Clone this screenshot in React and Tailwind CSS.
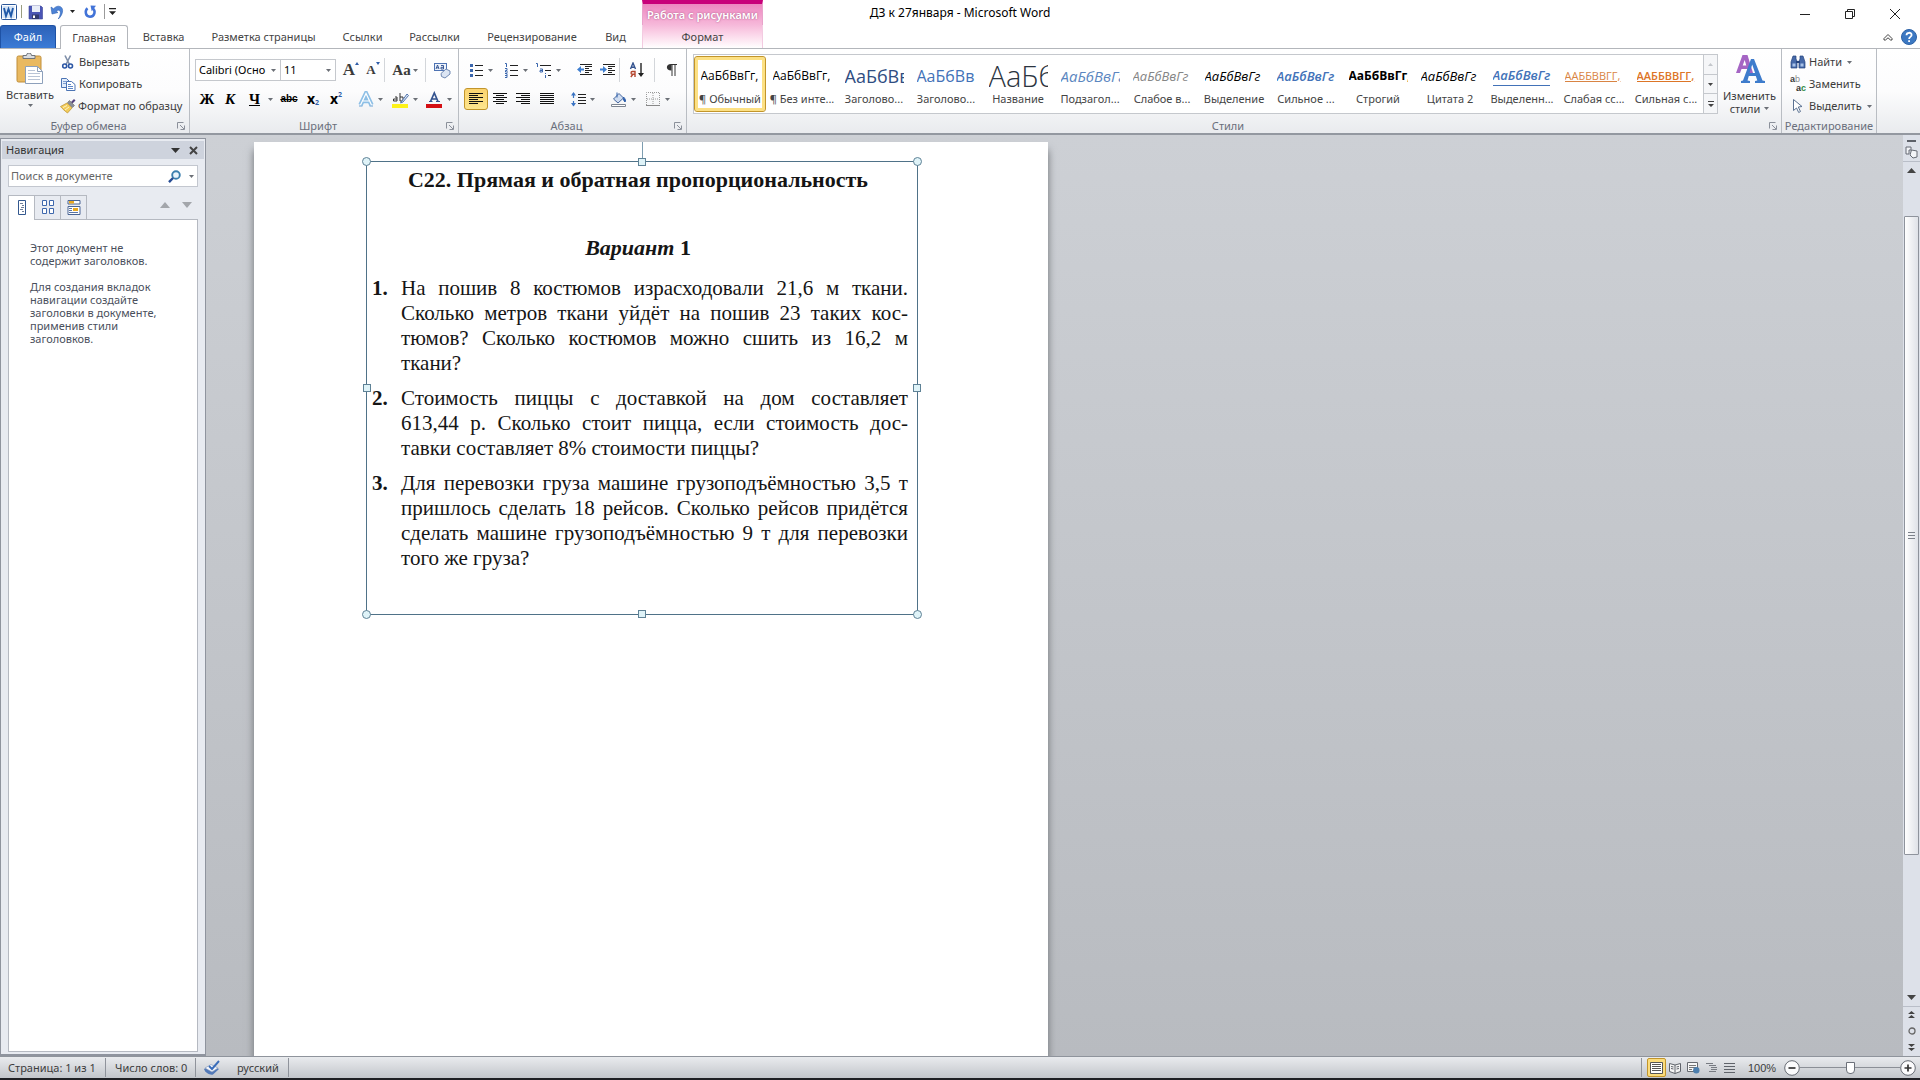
import React, { useState } from "react";

const tabs = [
  { name: "Вставка", width: "w-[69px]" },
  { name: "Разметка страницы", width: "w-[131px]" },
  { name: "Ссылки", width: "w-[67px]" },
  { name: "Рассылки", width: "w-[77px]" },
  { name: "Рецензирование", width: "w-[118px]" },
  { name: "Вид", width: "w-[49px]" },
];

const styles = [
  { name: "¶ Обычный", sample: "АаБбВвГг,", look: "text-[12px] text-black" },
  { name: "¶ Без инте...", sample: "АаБбВвГг,", look: "text-[12px] text-black" },
  { name: "Заголово...", sample: "АаБбВв", look: "text-[18px] font-medium text-[#2f4d82]" },
  { name: "Заголово...", sample: "АаБбВв", look: "text-[16px] font-medium text-[#4272b8]" },
  { name: "Название", sample: "АаБб", look: "text-[29px] font-light text-[#2b3440]" },
  { name: "Подзагол...", sample: "АаБбВвГг", look: "text-[15px] italic text-[#5b86c0]" },
  { name: "Слабое в...", sample: "АаБбВвГг", look: "text-[13px] italic text-[#858585]" },
  { name: "Выделение", sample: "АаБбВвГг", look: "text-[13px] italic text-black" },
  { name: "Сильное ...", sample: "АаБбВвГг", look: "text-[13px] italic font-semibold text-[#4272b8]" },
  { name: "Строгий", sample: "АаБбВвГг,", look: "text-[12px] font-bold text-black" },
  { name: "Цитата 2", sample: "АаБбВвГг", look: "text-[13px] italic text-black" },
  {
    name: "Выделенн...",
    sample: "АаБбВвГг",
    look: "text-[13px] italic font-semibold text-[#4272b8] border-b border-[#4272b8]",
  },
  {
    name: "Слабая сс...",
    sample: "ААББВВГГ,",
    look: "text-[11px] text-[#d98443] underline",
  },
  {
    name: "Сильная с...",
    sample: "ААББВВГГ,",
    look: "text-[11px] font-semibold text-[#dd7526] underline",
  },
];

const tasks = [
  [
    "На пошив 8 костюмов израсходовали 21,6 м ткани.",
    "Сколько метров ткани уйдёт на пошив 23 таких кос-",
    "тюмов? Сколько костюмов можно сшить из 16,2 м",
    "ткани?",
  ],
  [
    "Стоимость пиццы с доставкой на дом составляет",
    "613,44 р. Сколько стоит пицца, если стоимость дос-",
    "тавки составляет 8% стоимости пиццы?",
  ],
  [
    "Для перевозки груза машине грузоподъёмностью 3,5 т",
    "пришлось сделать 18 рейсов. Сколько рейсов придётся",
    "сделать машине грузоподъёмностью 9 т для перевозки",
    "того же груза?",
  ],
];

function Arrow({ color = "#6b6f76" }) {
  return (
    <svg width="5" height="3" viewBox="0 0 5 3" className="shrink-0">
      <path d="M0 0h5L2.5 3z" fill={color} />
    </svg>
  );
}

function Sep() {
  return <span className="h-6 w-px shrink-0 bg-[#d3d6da]" />;
}

function Icon({ children, size = 16, box = "0 0 16 16" }) {
  return (
    <svg width={size} height={size} viewBox={box} fill="none" className="shrink-0">
      {children}
    </svg>
  );
}

function Tool({ label, width, arrow, active, children }) {
  return (
    <button
      type="button"
      aria-label={label}
      className={`flex h-[22px] shrink-0 items-center justify-center gap-1 ${width} ${
        active
          ? "rounded-[3px] border border-[#c2952b] bg-gradient-to-b from-[#fbd36f] to-[#fde58d]"
          : ""
      }`}
    >
      {children}
      {arrow && <Arrow />}
    </button>
  );
}

function Group({ title, width, launcher, children }) {
  return (
    <section className={`flex flex-col border-r border-[#b9bdc3] ${width}`}>
      <div className="h-[69px]">{children}</div>
      <div className="flex h-[15px] items-center text-[#6a6f7c]">
        <h2 className="flex-1 text-center">{title}</h2>
        {launcher && (
          <button type="button" aria-label={`${title}: параметры`} className="mr-1">
            <svg width="8" height="8" viewBox="0 0 8 8" fill="none" stroke="#8b909a">
              <path d="M.5 6.500V.5h6M3 3l4 4M7.500 3.500v4h-4" />
            </svg>
          </button>
        )}
      </div>
    </section>
  );
}

function Lines({ rows, color = "#111" }) {
  return (
    <Icon>
      {rows.map(([x, w], i) => (
        <path key={i} d={`M${x} ${2.5 + i * 2}h${w}`} stroke={color} />
      ))}
    </Icon>
  );
}

function TitleBar() {
  return (
    <div className="grid h-[25px] bg-white">
      <div className="col-start-1 row-start-1 flex items-start">
        <div className="flex h-[23px] w-[642px] shrink-0 items-center pl-px">
          <Icon>
            <rect x=".5" y=".5" width="15" height="15" rx="1" fill="#fff" stroke="#2a5699" />
            <rect x="1.500" y="2" width="12" height="12" fill="#d5e4f6" />
            <path d="M3 4l2 8 2.500-7L10 12l2-8" stroke="#2059a8" strokeWidth="1.900" />
          </Icon>
          <span className="ml-1 h-[13px] w-px bg-[#9a9d80]" />
          <button type="button" aria-label="Сохранить" className="ml-[6px]">
            <Icon>
              <path d="M1 2h12l1.500 1.500V15H1z" fill="#4a55b5" stroke="#3b4597" strokeWidth=".6" />
              <path d="M4 2h8v6H4z" fill="#e8edf8" />
              <path d="M4 10.500h7V15H4z" fill="#31396f" />
              <path d="M5 11.500h2V14H5z" fill="#fff" />
            </Icon>
          </button>
          <button type="button" aria-label="Отменить" className="ml-[6px] flex items-center gap-1">
            <Icon>
              <path d="M1 3l1 7 6-1.500-2-1.300c3-2.500 6-.5 3.500 5.300-.4 1-.8 1.700-1.200 2.500C13 11 14 4.500 10.500 2.700 8 1.500 5.500 2.500 3.600 4.800z" fill="#4d83d6" stroke="#2f62b3" strokeWidth=".6" />
            </Icon>
            <Arrow color="#222" />
          </button>
          <button type="button" aria-label="Вернуть" className="ml-[7px]">
            <Icon>
              <path d="M5.500 4.300C2.800 6.500 3 12.700 8 12.700s5.800-6 2.800-8.200" stroke="#4273d8" strokeWidth="2.500" />
              <path d="M8.500 1.500l5.500 .3-4.300 5.500z" fill="#4273d8" />
            </Icon>
          </button>
          <span className="ml-[6px] h-[15px] w-px bg-[#9a9a9a]" />
          <button type="button" aria-label="Настройка панели быстрого доступа" className="ml-1">
            <svg width="7" height="7" viewBox="0 0 7 7">
              <path d="M0 0h7v1.200H0zM0 3.300h7L3.500 7z" fill="#222" />
            </svg>
          </button>
        </div>
        <div className="h-[25px] w-[121px] shrink-0 whitespace-nowrap border-x border-t-4 border-x-[#e9a3cb] border-t-[#c8007a] bg-gradient-to-b from-[#ec86c0] to-[#f6b9da] pt-[3px] text-center font-semibold text-white [text-shadow:0_0_2px_#a04a7c]">
          Работа с рисунками
        </div>
        <div className="flex-1" />
        <div className="flex h-[27px] items-center gap-[35px] pr-5">
          <button type="button" aria-label="Свернуть">
            <Icon size={10} box="0 0 10 10">
              <path d="M0 5.500h10" stroke="#222" />
            </Icon>
          </button>
          <button type="button" aria-label="Восстановить">
            <Icon size={10} box="0 0 10 10">
              <path d="M.5 2.500h7v7h-7zM2.500 2V.5h7v7H8" stroke="#222" />
            </Icon>
          </button>
          <button type="button" aria-label="Закрыть">
            <Icon size={10} box="0 0 10 10">
              <path d="M0 0l10 10M10 0L0 10" stroke="#222" />
            </Icon>
          </button>
        </div>
      </div>
      <h1 className="col-start-1 row-start-1 justify-self-center pt-[5px] text-[12px] text-black">
        ДЗ к 27января - Microsoft Word
      </h1>
    </div>
  );
}

function TabRow() {
  return (
    <nav className="flex h-6 items-stretch border-b border-[#b3b6bb] bg-white text-[#444]">
      <button
        type="button"
        className="w-14 shrink-0 rounded-t-[3px] border border-b-0 border-[#1e52a5] bg-gradient-to-b from-[#2d62b8] to-[#3b7bd6] text-center text-white"
      >
        Файл
      </button>
      <button
        type="button"
        className="-mb-px ml-1 w-[68px] shrink-0 rounded-t-[3px] border border-b-0 border-[#b3b6bb] bg-white text-center"
      >
        Главная
      </button>
      <span className="w-px shrink-0" />
      {tabs.map((tab) => (
        <button key={tab.name} type="button" className={`shrink-0 whitespace-nowrap text-center ${tab.width}`}>
          {tab.name}
        </button>
      ))}
      <span className="w-[2px] shrink-0" />
      <button
        type="button"
        className="w-[121px] shrink-0 border-x border-[#f3cbe1] bg-gradient-to-b from-[#f6b9da] to-white text-center"
      >
        Формат
      </button>
      <div className="flex flex-1 items-center justify-end gap-2 pr-[3px]">
        <button type="button" aria-label="Свернуть ленту">
          <svg width="10" height="8" viewBox="0 0 10 8" fill="none" stroke="#444">
            <path d="M1 5.500L5 1.500l4 4v1.500H7.500L5 4.800 2.500 7H1z" />
          </svg>
        </button>
        <button type="button" aria-label="Справка">
          <Icon>
            <circle cx="8" cy="8" r="7.500" fill="#3c78c2" stroke="#2d62a6" />
            <path d="M5.500 6.200C5.500 3 10.600 3 10.600 6c0 2-2.500 1.800-2.500 4M8.100 11.200v1.900" stroke="#fff" strokeWidth="1.800" />
          </Icon>
        </button>
      </div>
    </nav>
  );
}

function ClipboardGroup() {
  return (
    <Group title="Буфер обмена" width="w-[190px]" launcher>
      <div className="flex h-full pt-[2px]">
        <button type="button" className="flex w-[60px] flex-col items-center pt-[2px]">
          <svg width="28" height="32" viewBox="0 0 28 32" fill="none">
            <rect x="1" y="3" width="24" height="26" rx="1.500" fill="#e9b961" stroke="#c08e3b" />
            <path d="M7 5.500V2.500h3.500a2.500 2.500 0 015 0H19v3z" fill="#d9dce0" stroke="#70757c" />
            <path d="M9.500 13.500h12l5 5v12h-17z" fill="#fff" stroke="#8da0bb" />
            <path d="M21.500 13.500v5h5" stroke="#8da0bb" />
            <path d="M12 17.500h7M12 20.500h12M12 23.500h12M12 26.500h12" stroke="#b9c4d6" />
          </svg>
          <span className="mt-[2px] leading-4">Вставить</span>
          <span className="mt-px">
            <Arrow />
          </span>
        </button>
        <div className="flex flex-col">
          <button type="button" className="flex h-[22px] items-center gap-[3px]">
            <Icon>
              <path d="M5 1.500l4.500 9M10.500 1.500l-4.500 9" stroke="#7e8ea8" strokeWidth="1.600" />
              <circle cx="4.700" cy="12" r="2" stroke="#2c57a5" strokeWidth="1.600" />
              <circle cx="10.500" cy="12" r="2" stroke="#2c57a5" strokeWidth="1.600" />
            </Icon>
            Вырезать
          </button>
          <button type="button" className="flex h-[22px] items-center gap-[3px]">
            <Icon>
              <path d="M1.500 2.500h5l3 3v6h-8z" fill="#e3edfa" stroke="#4c74b4" />
              <path d="M3 5.500h3M3 7.500h4" stroke="#7d9dd0" />
              <path d="M6.500 5.500h5l3.500 3v6H6.500z" fill="#fff" stroke="#4c74b4" />
              <path d="M8 8.500h3M8 10.500h5M8 12.500h5" stroke="#5d86c8" />
            </Icon>
            Копировать
          </button>
          <button type="button" className="flex h-[22px] items-center gap-[2px] whitespace-nowrap">
            <Icon>
              <path d="M11 4l3-3 1.500 1.500-3 3z" fill="#55407d" />
              <path d="M7.500 4.500L9.500 2.500l5 5-2 2z" fill="#8a8e98" stroke="#555" strokeWidth=".5" />
              <path d="M7 5l5 5-4.500 5C5.500 13.500 2.500 11 .5 8.500z" fill="#f2cc5b" stroke="#b98e2c" strokeWidth=".7" />
              <path d="M3 9.500l4-2M5 12l4-3" stroke="#fff3c4" />
            </Icon>
            Формат по образцу
          </button>
        </div>
      </div>
    </Group>
  );
}

function FontGroup() {
  const [font, setFont] = useState("Calibri (Осно");
  const [size, setSize] = useState("11");

  return (
    <Group title="Шрифт" width="w-[269px]" launcher>
      <div className="flex h-full flex-col gap-[7px] pl-[5px] pt-[10px]">
        <div className="flex h-[22px] items-center">
          <div className="flex h-[22px] w-[86px] shrink-0 items-center border border-[#c5c8cd] bg-white pr-1">
            <select
              aria-label="Шрифт"
              value={font}
              onChange={(e) => setFont(e.target.value)}
              className="min-w-0 flex-1 appearance-none overflow-hidden bg-transparent pl-[3px] text-black"
            >
              <option>Calibri (Осно</option>
              <option>Cambria</option>
            </select>
            <Arrow />
          </div>
          <div className="flex h-[22px] w-[55px] shrink-0 items-center border border-l-0 border-[#c5c8cd] bg-white pr-1">
            <select
              aria-label="Размер шрифта"
              value={size}
              onChange={(e) => setSize(e.target.value)}
              className="min-w-0 flex-1 appearance-none bg-transparent pl-[3px] text-black"
            >
              <option>11</option>
              <option>12</option>
            </select>
            <Arrow />
          </div>
          <Tool label="Увеличить размер" width="ml-1 w-[22px]">
            <span className="flex items-start font-['Liberation_Serif',serif] text-[17px] font-bold leading-4">
              A
              <svg width="4" height="3" viewBox="0 0 4 3">
                <path d="M0 3l2-3 2 3z" fill="#2f5da8" />
              </svg>
            </span>
          </Tool>
          <Tool label="Уменьшить размер" width="w-[22px]">
            <span className="flex items-start font-['Liberation_Serif',serif] text-[13px] font-bold leading-4">
              A
              <svg width="4" height="3" viewBox="0 0 4 3">
                <path d="M0 0h4L2 3z" fill="#2f5da8" />
              </svg>
            </span>
          </Tool>
          <Sep />
          <Tool label="Регистр" width="w-10" arrow>
            <span className="-mr-[2px] font-['Liberation_Serif',serif] text-[15px] font-bold">Aa</span>
          </Tool>
          <Sep />
          <Tool label="Очистить формат" width="w-8">
            <Icon size={17} box="0 0 17 17">
              <rect x=".5" y="1.500" width="12" height="7" fill="#eef3fb" stroke="#4e73b3" />
              <path d="M2 7l1.500-4L5 7M2.600 5.800h2M7 3.500h2.500V7H7V5.300h2.500" stroke="#2a4c8c" strokeWidth=".9" />
              <path d="M7 11.500l5-4.500 4 2v3l-5 4-3.500-1.500z" fill="#dce5f3" stroke="#7089b3" />
            </Icon>
          </Tool>
        </div>
        <div className="flex h-[22px] items-center font-['Liberation_Serif',serif] text-[15px] font-bold text-black">
          <Tool label="Полужирный" width="w-6">Ж</Tool>
          <Tool label="Курсив" width="w-[22px]">
            <i>К</i>
          </Tool>
          <Tool label="Подчеркнутый" width="w-9" arrow>
            <span className="px-1 underline">Ч</span>
          </Tool>
          <Tool label="Зачеркнутый" width="w-6">
            <span className="font-['Liberation_Sans',sans-serif] text-[10px] line-through">abc</span>
          </Tool>
          <Tool label="Подстрочный знак" width="w-6">
            <span className="flex items-end font-['Noto_Sans',sans-serif] text-[14px] leading-4">
              x<span className="text-[7px] leading-[8px] text-[#2f5da8]">2</span>
            </span>
          </Tool>
          <Tool label="Надстрочный знак" width="w-[22px]">
            <span className="flex items-start font-['Noto_Sans',sans-serif] text-[14px] leading-4">
              x<span className="text-[7px] leading-[8px] text-[#2f5da8]">2</span>
            </span>
          </Tool>
          <span className="ml-[3px] mr-[2px]">
            <Sep />
          </span>
          <Tool label="Текстовые эффекты" width="w-9" arrow>
            <Icon>
              <path d="M2.500 14L8 2.500 13.500 14M5 10h6" stroke="#8dbfe6" strokeWidth="4.500" />
              <path d="M2.500 14L8 2.500 13.500 14M5 10h6" stroke="#fff" strokeWidth="1.200" />
              <path d="M1 15h3.500M11.500 15H15" stroke="#6ba3d4" />
            </Icon>
          </Tool>
          <Tool label="Цвет выделения" width="w-[34px]" arrow>
            <Icon size={17} box="0 0 17 17">
              <rect y="13" width="16" height="4" fill="#fdf21a" />
              <path d="M3 6h2v4H1.500V8H5M8 2v8h3V6H8" stroke="#333" />
              <path d="M8.500 12l6.500-9 1.500 1.500L11 11z" fill="#dce8f8" stroke="#5274ac" />
            </Icon>
          </Tool>
          <Tool label="Цвет текста" width="w-[34px]" arrow>
            <Icon size={17} box="0 0 17 17">
              <rect y="13" width="16" height="4" fill="#d40f14" />
              <path d="M4.500 10.500L8.300 2l3.700 8.500M6 8h5" stroke="#34538f" strokeWidth="1.700" />
              <path d="M3 10.500h3.500M10 10.500h4" stroke="#34538f" />
            </Icon>
          </Tool>
        </div>
      </div>
    </Group>
  );
}

function ParagraphGroup() {
  return (
    <Group title="Абзац" width="w-[228px]" launcher>
      <div className="flex h-full flex-col gap-[7px] pl-[5px] pt-[10px]">
        <div className="flex h-[22px] items-center">
          <Tool label="Маркеры" width="w-[33px]" arrow>
            <Icon>
              <path d="M2 2h3v3H2zM2 7h3v3H2zM2 12h3v3H2z" fill="#3a66ad" />
              <path d="M7 3.500h8M7 8.500h8M7 13.500h8" stroke="#222" />
            </Icon>
          </Tool>
          <Tool label="Нумерация" width="w-9" arrow>
            <Icon>
              <path d="M2 1.500h1.500V5M2 6.500h2v2H2.500V10H5M2 11.500h2v4H2M2 13.500h2" stroke="#3a66ad" />
              <path d="M7 3.500h8M7 8.500h8M7 13.500h8" stroke="#222" />
            </Icon>
          </Tool>
          <Tool label="Многоуровневый список" width="w-[30px]" arrow>
            <Icon size={17} box="0 0 17 17">
              <path d="M1 1.500h1.500V5M5 7h2.500v3H5V8.500h2.500M10.500 11v1M10.500 13v3" stroke="#3a66ad" />
              <path d="M5 3.500h11M10 8.500h6M13 13.500h3" stroke="#222" />
            </Icon>
          </Tool>
          <span className="mx-[5px]">
            <Sep />
          </span>
          <Tool label="Уменьшить отступ" width="w-6">
            <Icon>
              <path d="M3 2.500h12M8 4.500h7M8 6.500h4M8 8.500h7M8 10.500h4M3 12.500h12" stroke="#222" />
              <path d="M0 7.500L4 4v2.500h3v2H4V11z" fill="#3f7fd0" />
            </Icon>
          </Tool>
          <Tool label="Увеличить отступ" width="w-[22px]">
            <Icon>
              <path d="M3 2.500h12M8 4.500h7M8 6.500h4M8 8.500h7M8 10.500h4M3 12.500h12" stroke="#222" />
              <path d="M7 7.500L3 4v2.500H0v2h3V11z" fill="#3f7fd0" />
            </Icon>
          </Tool>
          <Sep />
          <Tool label="Сортировка" width="w-[34px]">
            <Icon>
              <path d="M1.500 7L4 1l2.500 6M2.500 5.200h3" stroke="#34538f" strokeWidth="1.400" />
              <path d="M6 15V9.500H3.200c-1.500 0-1.500 2.800 0 2.800H6M4 12.300L1.800 15" stroke="#b5462f" strokeWidth="1.400" />
              <path d="M12 1v12" stroke="#222" strokeWidth="1.400" />
              <path d="M9 11h6l-3 4z" fill="#222" />
            </Icon>
          </Tool>
          <Sep />
          <Tool label="Отобразить все знаки" width="w-8">
            <Icon>
              <path d="M8 2.500h6M9 2.500V14M12 2.500V14" stroke="#333" />
              <path d="M8.500 2v6.500H8C2.500 8.500 2.500 2 8 2z" fill="#333" />
            </Icon>
          </Tool>
        </div>
        <div className="flex h-[22px] items-center">
          <Tool label="По левому краю" width="w-6" active>
            <Lines rows={[[1, 14], [1, 9], [1, 14], [1, 9], [1, 14], [1, 9]]} />
          </Tool>
          <Tool label="По центру" width="w-[23px]">
            <Lines rows={[[1, 14], [4, 8], [1, 14], [4, 8], [1, 14], [4, 8]]} />
          </Tool>
          <Tool label="По правому краю" width="w-6">
            <Lines rows={[[1, 14], [6, 9], [1, 14], [6, 9], [1, 14], [6, 9]]} />
          </Tool>
          <Tool label="По ширине" width="w-[23px]">
            <Lines rows={[[1, 14], [1, 14], [1, 14], [1, 14], [1, 14], [1, 14]]} />
          </Tool>
          <span className="mx-1">
            <Sep />
          </span>
          <Tool label="Интервал" width="w-8" arrow>
            <Icon>
              <path d="M3.500 2v5M3.500 10v5" stroke="#3a74c4" strokeWidth="1.200" />
              <path d="M1 4.500L3.500 1 6 4.500zM1 12l2.500 3.500L6 12z" fill="#3a74c4" />
              <path d="M8 3.500h8M8 6.500h8M8 9.500h8M8 12.500h8" stroke="#222" />
            </Icon>
          </Tool>
          <span className="ml-[6px]">
            <Sep />
          </span>
          <Tool label="Заливка" width="w-[38px]" arrow>
            <Icon>
              <path d="M2.500 8L8 2.500 12.500 7 7 12z" fill="#cfdcf0" stroke="#46679f" />
              <path d="M6 1.500v5M12.500 6c2 2 2.500 4 1.500 5-1-1-2-2.500-1.500-5z" stroke="#2d5eab" fill="#2d5eab" />
              <path d="M.5 13.500h14v2H.5z" fill="#fff" stroke="#7d8591" />
            </Icon>
          </Tool>
          <Tool label="Границы" width="w-[30px]" arrow>
            <Icon>
              <path d="M1.500 14V1.500h13V14M8 2v12M2 8h12" stroke="#9a9a9a" strokeDasharray="1 1" />
              <path d="M1 14.500h14" stroke="#888" />
            </Icon>
          </Tool>
        </div>
      </div>
    </Group>
  );
}

function StylesGroup() {
  return (
    <Group title="Стили" width="min-w-0 flex-1" launcher>
      <div className="flex h-full pl-[6px] pt-[5px]">
        <div className="flex h-[60px] min-w-0 flex-1 border border-[#c5c8cd] bg-white">
          <div className="flex min-w-0 flex-1 overflow-hidden pt-px">
            {styles.map((style, i) => (
              <button
                key={i}
                type="button"
                className={`flex h-14 w-[72px] shrink-0 flex-col items-center rounded-[3px] border ${
                  i === 0
                    ? "border-[#c2952b] shadow-[inset_0_0_0_3px_#fce084]"
                    : "border-transparent"
                }`}
              >
                <span className="flex h-[34px] w-[59px] items-center overflow-hidden pt-[3px] font-['Open_Sans',sans-serif]">
                  <span className={`whitespace-nowrap leading-5 ${style.look}`}>{style.sample}</span>
                </span>
                <span className="whitespace-nowrap leading-4 text-[#444]">{style.name}</span>
              </button>
            ))}
          </div>
          <div className="flex w-[14px] shrink-0 flex-col divide-y divide-[#c5c8cd] border-l border-[#c5c8cd] bg-[#f5f6f8]">
            <button type="button" aria-label="Вверх" className="flex flex-1 items-center justify-center">
              <svg width="5" height="3" viewBox="0 0 5 3">
                <path d="M0 3h5L2.500 0z" fill="#c3c6cb" />
              </svg>
            </button>
            <button type="button" aria-label="Вниз" className="flex flex-1 items-center justify-center">
              <Arrow color="#444" />
            </button>
            <button type="button" aria-label="Дополнительно" className="flex flex-1 items-center justify-center">
              <svg width="6" height="6" viewBox="0 0 6 6">
                <path d="M0 0h6v1H0zM0 3h6L3 6z" fill="#444" />
              </svg>
            </button>
          </div>
        </div>
        <button type="button" className="flex w-[63px] shrink-0 flex-col items-center">
          <svg width="30" height="30" viewBox="0 0 30 30">
            <path d="M1 19L7.500 1h5L18 19h-4.500l-1.200-4H6.500L5 19zm6.700-7.500h3.600L9.700 6z" fill="#a565c4" />
            <path d="M6 29v-2l2-.5L16 5h3l8.500 21.500 2.500.5v2h-10v-2l2.300-.5-1.500-4.500h-7l-1.300 4.500 2.500.5v2zm8.500-10h5.600L17.200 10.500z" fill="#3e7ccc" />
          </svg>
          <span className="mt-[5px] block leading-[13px]">Изменить</span>
          <span className="flex items-center gap-1 leading-[13px]">
            стили <Arrow />
          </span>
        </button>
      </div>
    </Group>
  );
}

function EditGroup() {
  return (
    <Group title="Редактирование" width="w-[95px] whitespace-nowrap">
      <div className="flex h-full flex-col pl-2 pt-[2px]">
        <button type="button" className="flex h-[22px] items-center gap-[3px]">
          <Icon>
            <path d="M3 2h3v3l1 2v7H1V8zM13 2h-3v3L9 7v7h6V8z" fill="#4669a8" stroke="#27457e" strokeWidth=".7" />
            <path d="M6 7h4v2H6z" fill="#27457e" />
            <path d="M2.500 9.500h3v3h-3zM10.500 9.500h3v3h-3z" fill="#a9c3e8" />
          </Icon>
          Найти
          <span className="ml-[2px]">
            <Arrow />
          </span>
        </button>
        <button type="button" className="flex h-[22px] items-center gap-[3px]">
          <span className="flex w-4 flex-col font-['Liberation_Sans',sans-serif] text-[9px] font-bold leading-[9px]">
            <span className="text-left">
              a<span className="font-normal text-[#8c8c8c]">b</span>
            </span>
            <span className="text-right text-[#2f8a45]">
              <span className="text-[#333]">a</span>c
            </span>
          </span>
          Заменить
        </button>
        <button type="button" className="flex h-[22px] items-center gap-[3px]">
          <Icon>
            <path d="M3.500 1.500v11l3-2.500 2.200 4.500 1.800-1-2.200-4.500 3.700-.5z" fill="#fff" stroke="#5b7292" />
          </Icon>
          Выделить
          <span className="ml-[2px]">
            <Arrow />
          </span>
        </button>
      </div>
    </Group>
  );
}

function Navigation() {
  return (
    <aside className="mt-[3px] flex w-[206px] shrink-0 flex-col border border-b-2 border-[#8f949e] bg-[#e8ebf1] px-[7px] pb-[2px] pt-[2px]">
      <div className="-mx-[6px] flex h-[18px] items-center bg-[#ced3dd] pl-1 pr-[6px] text-[#333]">
        <h2 className="flex-1">Навигация</h2>
        <button type="button" aria-label="Параметры области задач">
          <svg width="9" height="5" viewBox="0 0 9 5">
            <path d="M0 0h9L4.500 5z" fill="#333" />
          </svg>
        </button>
        <button type="button" aria-label="Закрыть область" className="ml-[9px]">
          <Icon size={9} box="0 0 9 9">
            <path d="M1 1l7 7M8 1L1 8" stroke="#444" strokeWidth="2" />
          </Icon>
        </button>
      </div>
      <div className="mt-[6px] flex h-[22px] shrink-0 items-center border border-[#c3c7cf] bg-white pr-[3px]">
        <input
          type="text"
          aria-label="Поиск в документе"
          placeholder="Поиск в документе"
          className="min-w-0 flex-1 bg-transparent pl-[2px] outline-none placeholder:text-[#666]"
        />
        <button type="button" aria-label="Найти" className="mr-2">
          <Icon size={13} box="0 0 13 13">
            <circle cx="8" cy="5" r="3.800" fill="#eaf4fc" stroke="#3b7fae" strokeWidth="1.900" />
            <path d="M5 8l-4 4.200" stroke="#274c94" strokeWidth="2.400" />
          </Icon>
        </button>
        <Arrow />
      </div>
      <div className="mt-2 flex h-[25px] shrink-0 text-[#aaa]">
        <button type="button" aria-label="Заголовки" className="-mb-px flex w-[27px] items-center justify-center border border-b-0 border-[#b5b9c1] bg-white pb-[3px]">
          <Icon>
            <path d="M4.500 1.500h7v14h-7z" fill="#fff" stroke="#33588f" />
            <path d="M6 4.500h3M8 6.500h2M7 8.500h3M6 10.500h3M8 12.500h2" stroke="#6f7f99" />
          </Icon>
        </button>
        <button type="button" aria-label="Страницы" className="flex w-[26px] items-center justify-center border-b border-r border-t border-[#b5b9c1] pb-[2px]">
          <Icon>
            <path d="M2.500 1.500h4v5h-4zM9.500 1.500h4v5h-4zM2.500 9.500h4v5h-4zM9.500 9.500h4v5h-4z" fill="#fff" stroke="#3f68ad" />
          </Icon>
        </button>
        <button type="button" aria-label="Результаты" className="flex w-[26px] items-center justify-center border-b border-r border-t border-[#b5b9c1] pb-[2px]">
          <Icon>
            <path d="M2 1.500h12v3.500H2zM2 7.500h12v8H2z" fill="#fff" stroke="#4a6595" />
            <path d="M3 2h5v2.500H3zM7 9h5v3H7z" fill="#e8a823" />
            <path d="M3 9.500h3M3 11.500h3M3 13.500h9" stroke="#5a74a2" />
          </Icon>
        </button>
        <div className="flex flex-1 items-center justify-end gap-3 border-b border-[#b5b9c1] pb-1 pr-[6px]">
          <button type="button" aria-label="Предыдущий">
            <svg width="10" height="6" viewBox="0 0 10 6">
              <path d="M0 6h10L5 0z" fill="#a3a6ab" />
            </svg>
          </button>
          <button type="button" aria-label="Следующий">
            <svg width="10" height="6" viewBox="0 0 10 6">
              <path d="M0 0h10L5 6z" fill="#a3a6ab" />
            </svg>
          </button>
        </div>
      </div>
      <div className="flex-1 border border-t-0 border-[#b5b9c1] bg-white px-[21px] pt-[21px] leading-[13px] text-[#4a4f5c]">
        <p>
          Этот документ не
          <br />
          содержит заголовков.
        </p>
        <p className="mt-[13px]">
          Для создания вкладок
          <br />
          навигации создайте
          <br />
          заголовки в документе,
          <br />
          применив стили
          <br />
          заголовков.
        </p>
      </div>
    </aside>
  );
}

function Handle({ place, round }) {
  return (
    <span
      className={`absolute border border-[#5f8296] bg-[#dff3f8] ${
        round ? "size-[9px] rounded-full" : "size-2"
      } ${place}`}
    />
  );
}

function Picture() {
  return (
    <figure className="relative ml-28 mt-[19px] h-[454px] w-[552px] border border-[#4f7288] px-[5px] pt-[5px] font-['Liberation_Serif',serif] text-[21px] leading-[25px] text-[#151515]">
      <span className="absolute -top-5 left-1/2 h-5 w-px bg-[#7d9db0]" />
      <Handle place="-left-[5px] -top-[5px]" round />
      <Handle place="-right-[5px] -top-[5px]" round />
      <Handle place="-bottom-[5px] -left-[5px]" round />
      <Handle place="-bottom-[5px] -right-[5px]" round />
      <Handle place="-top-1 left-[271px]" />
      <Handle place="-bottom-1 left-[271px]" />
      <Handle place="-left-1 top-[222px]" />
      <Handle place="-right-1 top-[222px]" />
      <h3 className="pr-2 text-center text-[22px] font-bold">
        С22. Прямая и обратная пропорциональность
      </h3>
      <h4 className="mt-[43px] pr-2 text-center text-[22px] font-bold">
        <i>Вариант</i> 1
      </h4>
      <ol className="mt-4 flex flex-col gap-[10px] pr-1">
        {tasks.map((lines, i) => (
          <li key={i} className="flex">
            <b className="w-[29px] shrink-0">{i + 1}.</b>
            <div className="flex-1">
              {lines.map((line, k) => (
                <p
                  key={line}
                  className={`whitespace-nowrap ${
                    k < lines.length - 1 ? "[text-align-last:justify]" : ""
                  }`}
                >
                  {line}
                </p>
              ))}
            </div>
          </li>
        ))}
      </ol>
    </figure>
  );
}

function ScrollBar() {
  return (
    <div className="flex w-[17px] shrink-0 flex-col items-center bg-[#dde1e9] pt-[5px] text-[#444]">
      <span className="h-[2px] w-[9px] bg-[#5c6068]" />
      <button type="button" aria-label="Линейка" className="mt-1">
        <Icon size={13} box="0 0 13 13">
          <path d="M1 1h5v3H4v4H1zM6.500 4l5.500 1v6l-4 1-3-3z" fill="#f3f5f8" stroke="#666b74" />
        </Icon>
      </button>
      <span className="mt-[2px] h-px w-full bg-[#b9bec8]" />
      <button type="button" aria-label="Прокрутить вверх" className="mt-[3px]">
        <svg width="9" height="5" viewBox="0 0 9 5" className="my-[3px]">
          <path d="M0 5h9L4.500 0z" fill="#444" />
        </svg>
      </button>
      <div className="mt-10 flex h-[639px] w-[15px] shrink items-center justify-center rounded-[1px] border border-[#8e939c] bg-gradient-to-r from-white to-[#dfe2e8]">
        <svg width="7" height="7" viewBox="0 0 7 7" stroke="#7c818a">
          <path d="M0 .5h7M0 3.500h7M0 6.500h7" />
        </svg>
      </div>
      <div className="flex-1" />
      <button type="button" aria-label="Прокрутить вниз">
        <svg width="9" height="5" viewBox="0 0 9 5">
          <path d="M0 0h9L4.500 5z" fill="#444" />
        </svg>
      </button>
      <span className="mt-[6px] h-px w-full bg-[#b9bec8]" />
      <button type="button" aria-label="Предыдущая страница" className="mt-1">
        <svg width="7" height="7" viewBox="0 0 7 7">
          <path d="M0 3l3.500-3L7 3zM0 7l3.500-3L7 7z" fill="#444" />
        </svg>
      </button>
      <button type="button" aria-label="Выбор объекта перехода" className="mt-[9px]">
        <svg width="8" height="8" viewBox="0 0 8 8">
          <circle cx="4" cy="4" r="3" fill="none" stroke="#666" strokeWidth="1.300" />
        </svg>
      </button>
      <button type="button" aria-label="Следующая страница" className="mb-[5px] mt-[9px]">
        <svg width="7" height="7" viewBox="0 0 7 7">
          <path d="M0 0h7L3.500 3zM0 4h7L3.500 7z" fill="#444" />
        </svg>
      </button>
    </div>
  );
}

function StatusBar() {
  const [zoom, setZoom] = useState(50);

  return (
    <footer className="flex h-[22px] shrink-0 items-center border-t border-[#8f949c] bg-gradient-to-b from-[#e9ebee] to-[#c3c6cb] text-[#3c3c3c]">
      <span className="w-[105px] whitespace-nowrap pl-2">Страница: 1 из 1</span>
      <span className="h-[19px] w-px bg-[#8f939b]" />
      <span className="w-[89px] whitespace-nowrap pl-[9px]">Число слов: 0</span>
      <span className="h-[19px] w-px bg-[#8f939b]" />
      <button type="button" aria-label="Правописание" className="ml-2">
        <Icon>
          <path d="M0 9l7-4 8 4-6 5.500C6 15.500 1 12.500 0 9z" fill="#5279b8" />
          <path d="M1 8l6-3.500 7 3.500-6 4z" fill="#f4f7fc" stroke="#7f93b5" strokeWidth=".6" />
          <path d="M5 6l3 3 7-8" stroke="#3a6dba" strokeWidth="1.900" />
        </Icon>
      </button>
      <button type="button" className="w-[68px] pl-[17px] text-left">русский</button>
      <span className="h-[19px] w-px bg-[#8f939b]" />
      <div className="flex-1" />
      <span className="h-[19px] w-px bg-[#8f939b]" />
      <button type="button" aria-label="Разметка страницы" className="ml-[5px] flex h-[19px] w-[19px] items-center justify-center rounded-[2px] border border-[#c2952b] bg-[#fbdc7c]">
        <Icon size={13} box="0 0 13 13">
          <path d="M.5 1.500h12v11H.5z" fill="#fff" stroke="#555" />
          <path d="M2 3.500h9M2 5.500h9M2 7.500h9M2 9.500h9" stroke="#555" />
        </Icon>
      </button>
      <button type="button" aria-label="Режим чтения" className="ml-[3px]">
        <Icon size={12} box="0 0 12 12">
          <path d="M.5 1.500L6 3l5.500-1.500v8L6 11.500.5 9.500zM6 3v8.500M2 4.500l2.500.5M2 6.500l2.500.5M7.500 5l2.500-.5M7.500 7l2.500-.5" fill="#f4f4f4" stroke="#5f636a" />
        </Icon>
      </button>
      <button type="button" aria-label="Веб-документ" className="ml-[6px]">
        <Icon size={13} box="0 0 13 13">
          <path d="M.5 1.500h10v9H.5z" fill="#f6f6f6" stroke="#666a70" />
          <path d="M2 4.500h7M2 6.500h7M2 8.500h3" stroke="#777" />
          <circle cx="9.300" cy="9.300" r="3.200" fill="#4d7fae" />
        </Icon>
      </button>
      <button type="button" aria-label="Структура" className="ml-[6px]">
        <Icon size={11} box="0 0 11 11">
          <path d="M0 1.500h7M3 3.500h7M5 5.500h6M5 7.500h6M3 9.500h7" stroke="#777b82" />
        </Icon>
      </button>
      <button type="button" aria-label="Черновик" className="ml-[7px]">
        <Icon size={11} box="0 0 11 11">
          <path d="M0 1.500h11M0 4.500h11M0 7.500h11M0 10.500h11" stroke="#5f636a" />
        </Icon>
      </button>
      <button type="button" className="ml-[13px] w-[36px] text-left font-['Liberation_Sans',sans-serif]">
        100%
      </button>
      <button type="button" aria-label="Уменьшить масштаб">
        <Icon>
          <circle cx="8" cy="8" r="7.300" fill="#fbfbfc" stroke="#666b73" />
          <path d="M4.500 8h7" stroke="#333" strokeWidth="1.700" />
        </Icon>
      </button>
      <input
        type="range"
        aria-label="Масштаб"
        value={zoom}
        onChange={(e) => setZoom(Number(e.target.value))}
        className="h-4 w-[100px] appearance-none bg-[linear-gradient(#8b8f96,#8b8f96)] bg-[length:100%_1px] bg-center bg-no-repeat [&::-webkit-slider-thumb]:h-3 [&::-webkit-slider-thumb]:w-[9px] [&::-webkit-slider-thumb]:appearance-none [&::-webkit-slider-thumb]:rounded-b-[4px] [&::-webkit-slider-thumb]:border [&::-webkit-slider-thumb]:border-[#6c717a] [&::-webkit-slider-thumb]:bg-white"
      />
      <button type="button" aria-label="Увеличить масштаб" className="mr-1">
        <Icon>
          <circle cx="8" cy="8" r="7.300" fill="#fbfbfc" stroke="#666b73" />
          <path d="M4.500 8h7M8 4.500v7" stroke="#333" strokeWidth="1.700" />
        </Icon>
      </button>
    </footer>
  );
}

function App() {
  return (
    <div className="flex h-screen flex-col overflow-hidden border-b-2 border-[#1f2024] bg-white font-['Noto_Sans',sans-serif] text-[11px] leading-4 text-[#3b3b3b]">
      <header className="shrink-0">
        <TitleBar />
        <TabRow />
        <div className="flex h-[86px] border-b-2 border-[#9398a0] bg-gradient-to-b from-white via-[#fcfcfd] to-[#e9ebee]">
          <ClipboardGroup />
          <FontGroup />
          <ParagraphGroup />
          <StylesGroup />
          <EditGroup />
          <div className="w-[43px] shrink-0" />
        </div>
      </header>
      <div className="flex min-h-0 flex-1 bg-gradient-to-b from-[#cdd0d5] to-[#b8bbc0]">
        <Navigation />
        <main className="flex min-w-0 flex-1 overflow-hidden pl-12 pt-[7px]">
          <article className="w-[794px] shrink-0 bg-white shadow-[0_8px_8px_#6d7075]">
            <Picture />
          </article>
        </main>
        <ScrollBar />
      </div>
      <StatusBar />
    </div>
  );
}

export default App;
